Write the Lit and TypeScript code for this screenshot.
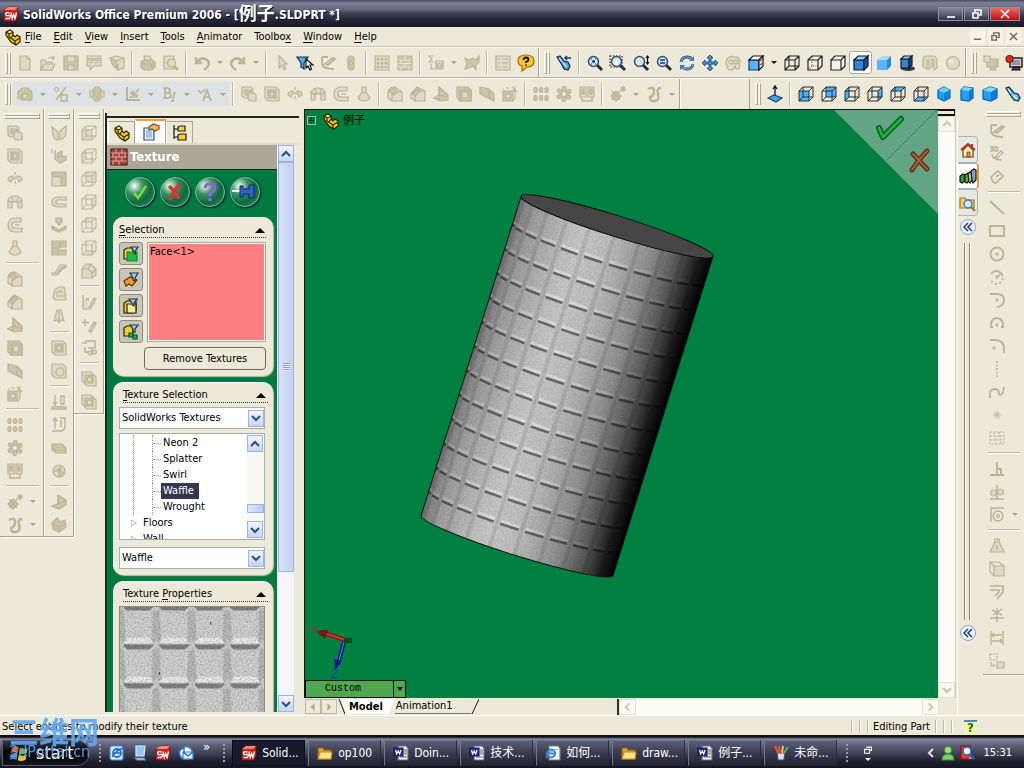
import { LitElement, html, svg, css, nothing, type SVGTemplateResult } from "lit";
import { customElement, state } from "lit/decorators.js";

type Frag = SVGTemplateResult;

/* ---------- icon building blocks ---------- */

const faces: Record<string, string> = {
  front: "M1 5h10v10H1z",
  back: "M5 1h10v10H5z",
  left: "M1 5l4-4v10l-4 4z",
  right: "M11 5l4-4v10l-4 4z",
  top: "M1 5l4-4h10l-4 4z",
  bottom: "M1 15l4-4h10l-4 4z",
};
const edges = "M1 5h10v10H1zM5 1h10v10H5zM1 5l4-4M11 5l4-4M11 15l4-4M1 15l4-4";
const outline = "M1 5h10v10H1zM1 5l4-4h10v10l-4 4M11 5l4-4";

const wireCube = (face: string, tint = "#4db2ff"): Frag => svg`
  <path d=${faces[face]} fill=${tint} stroke="none"/>
  <path d=${edges} fill="none" stroke="#2a2a2a" stroke-width="1"/>`;
const greyCube = (face: string): Frag => svg`
  <path d=${faces[face]} stroke="none"/><path d=${edges} fill="none" stroke-width="1"/>`;
const isoCube = (): Frag => svg`
  <path d="M8 1l6 3v8l-6 3-6-3V4z" fill="#1ea0f5" stroke="#0a5fa8"/>
  <path d="M2 4l6 3 6-3-6-3z" fill="#6fd0ff" stroke="none"/><path d="M8 7v8l6-3V4z" fill="#1180dd" stroke="none"/>`;
const blueCube = (): Frag => svg`
  <path d="M2 4l3-3 9 1v10l-4 3-8-1z" fill="#1ea0f5" stroke="#0a5fa8"/>
  <path d="M2 4l3-3 9 1-4 3z" fill="#7fd6ff" stroke="none"/><path d="M10 5l4-3v10l-4 3z" fill="#1276cc" stroke="none"/>`;
const wideCube = (): Frag => svg`
  <path d="M1 4l7-3 7 2v9l-6 3-8-2z" fill="#1ea0f5" stroke="#0a5fa8"/>
  <path d="M1 4l7-3 7 2-6 3z" fill="#7fd6ff" stroke="none"/><path d="M9 6l6-3v9l-6 3z" fill="#1276cc" stroke="none"/>`;
const lens = (inner: Frag): Frag => svg`
  <path d="M10 10l5 5" stroke="#2b3038" stroke-width="3" fill="none"/>
  <circle cx="6.500" cy="6.500" r="5" fill="#cfe9fb" stroke="#3a4f68" stroke-width="1.500"/>${inner}`;
const swLogo = (): Frag => svg`
  <path d="M1 4l4-3h10v10l-3 4H1z" fill="#c9231f" stroke="#7d100d" stroke-width=".8"/>
  <path d="M1 4l4-3h10l-3 3z" fill="#f08a80" stroke="none"/>
  <path d="M6.500 7q-4-1-4 1t3.500 1.500 0 3H2.500M8 6.500l1.300 6 1.400-4 1.300 4 1.500-6" fill="none" stroke="#fff" stroke-width="1.300"/>`;
const part = (): Frag => svg`
  <path d="M1 3l4-2 3 2v3l2 2 2-2 3 2v5l-4 3-5-3-5-7z" fill="#f3c91d" stroke="#2b2304"/>
  <path d="M1 3l3 2 4-2M4 5v3l6 4v4M10 12l5-3M6 9l2-3" fill="none" stroke="#2b2304"/><path d="M3 3l2-1 2 1-2 1z" fill="#fff4a0" stroke="none"/>`;
const doc = (): Frag => svg`
  <path d="M5 1h8l2 2v12H5z" fill="#fff" stroke="#667"/><path d="M11 5h3M11 7h3M11 9h3M7 12h7" stroke="#557" fill="none"/>
  <path d="M1 3h9v8H1z" fill="#26328f" stroke="#131b5a"/><path d="M2.500 5l1.200 4 1.500-3 1.500 3 1.300-4" fill="none" stroke="#fff"/>`;
const folder = (): Frag => svg`
  <path d="M1 3h5l1 2h7v9H1z" fill="#d9a52c" stroke="#8a6412"/><path d="M3 7h12l-1 7H1z" fill="#ffe58a" stroke="#b98b25"/>`;

const icons: Record<string, Frag> = {
  swLogo: swLogo(), part: part(), doc: doc(), folder: folder(),
  new: svg`<path d="M3 1h7l3 3v11H3z"/><path d="M10 1v3h3" fill="none"/>`,
  open: svg`<path d="M1 5h4l1 2h6v8H1z"/><path d="M4 9h11l-3 6H1z"/><path d="M8 4q3-4 6 0M14 1v3h-3" fill="none"/>`,
  save: svg`<path d="M1 1h14v14H1z" class="d"/><path d="M4 1h8v6H4zM5 10h6v5H5z"/>`,
  props: svg`<path d="M1 1h14v10H8l-4 4v-4H1z"/><path d="M3 3.500h4v2H3zM9 3.500h4v2H9zM3 7.500h4M9 7.500h4" fill="none"/>`,
  assembly: svg`<path d="M1 3l6-2 8 2v10l-6 2-3-3z"/><path d="M1 3l6 3v6M7 6l8-3M2 7l3 5 4 1V9" class="d"/>`,
  print: svg`<path d="M4 1h6l2 6H5z"/><path d="M1 7l3-2h9l2 3v4l-3 3H4l-3-3z" class="d"/><path d="M1 9h11v4" fill="none"/>`,
  preview: svg`<path d="M1 1h10v13H1z"/><circle cx="8.500" cy="8" r="4"/><path d="M11 11l4 4" stroke-width="2.500"/>`,
  undo: svg`<path d="M2 2v6h6M3 7q5-6 10-2t-3 10" fill="none" stroke-width="2.500"/>`,
  redo: svg`<path d="M14 2v6H8M13 7Q8 1 3 5t3 10" fill="none" stroke-width="2.500"/>`,
  cursor: svg`<path d="M5 1v12l3-3 2 5 2-1-2-5h3z"/>`,
  filter: svg`<path d="M0 2h11L7 8v6l-3-2V8z" fill="#5ea6e4" stroke="#12305c"/><path d="M9 4v9l2-2 2 4 1.500-1L13 10h3z" fill="#fff" stroke="#111"/>`,
  sketch: svg`<path d="M2 2v6q0 6 12 6M2 2h6M5 9l8-6 2 1-7 6z" fill="none" stroke-width="1.800"/>`,
  sketch3d: svg`<path d="M1 1h3v2H2h2v2H1M6 1v4h2l1-2-1-2zM3 8q0 6 10 6M6 11l6-6 2 2-6 5z" fill="none" stroke-width="1.300"/>`,
  traffic: svg`<rect x="5" y="1" width="6" height="14" rx="3" class="d"/><circle cx="8" cy="8" r="1.500"/>`,
  grid9: svg`<path d="M1 1h14v14H1z"/><path d="M4 3v10M8 3v10M12 3v10" stroke-dasharray="2.500 1.500" stroke-width="2.500"/>`,
  bricks: svg`<path d="M1 1h14v14H1z" class="d"/><path d="M1 5h14M1 8.500h14M1 12h14M8 1v4M4 5v3.500M12 5v3.500M8 8.500V12M4 12v3M12 12v3" stroke="#e6e2cd"/>`,
  sigma: svg`<path d="M6 1H1l3 3-3 3h5M3 9v5h4" fill="none"/><path d="M8 6h7v8H8z"/><circle cx="11.500" cy="10.500" r="2"/>`,
  animal: svg`<path d="M1 3l4 2 4-2 3 2 3-4v6l-3 3v5l-3-4-4 2-4 1 2-5z" class="d"/>`,
  list: svg`<path d="M1 1h14v14H1z"/><path d="M3 4h2M7 4h6M3 8h2M7 8h6M3 12h2M7 12h6"/>`,
  help: svg`<path d="M8 0q8 0 8 6t-7 6l-5 4V11q-4-1-4-5 0-6 8-6z" fill="#fbc62a" stroke="#a06b00"/><path d="M5.500 5q0-2.500 2.500-2.500t2.500 2q0 1.500-2.500 2.500v1M8 9.500v1.300" fill="none" stroke="#111" stroke-width="1.800"/>`,
  torch: svg`<path d="M1 2l3-1 4 5 4 1 2 4-2 4-4-1-2-4z" fill="#4b9bd8" stroke="#0d2950"/><path d="M7 8l4 4M3 3l3 4" stroke="#e4f4ff"/><path d="M15 3H9M11 1L9 3l2 2" fill="none" stroke="#123a86" stroke-width="1.500"/>`,
  torch2: svg`<path d="M1 2l3-1 5 6 4 1 2 4-2 3-4-1-3-4z" fill="#6ab9d8" stroke="#0d2950"/><path d="M8 9l4 4M3 3l3 4" stroke="#e4f4ff"/>`,
  zoomFit: lens(svg`<path d="M5 6.500h3M6.500 5v3" stroke="#123a86" stroke-width="1.500"/><path d="M4 4h1M8 4h1M4 9h1M8 9h1" stroke="#123a86"/>`),
  zoomArea: svg`<path d="M0 1h12v11H0z" fill="none" stroke="#222" stroke-dasharray="1.500 1.500"/>${lens(svg`<path d="M6.500 4v5l-2-2" fill="none" stroke="#fff" stroke-width="1.500"/>`)}`,
  zoomInOut: svg`${lens(svg``)}<path d="M14.500 1v8M13 3l1.500-2L16 3M13 7l1.500 2L16 7" fill="none" stroke="#111"/>`,
  zoomSel: lens(svg`<path d="M4 5h5M4 8h5" stroke="#123a86" stroke-width="1.600"/>`),
  rotate: svg`<path d="M2 7q1-5 6-5 3 0 5 2M14 9q-1 5-6 5-3 0-5-2" fill="none" stroke="#20477c" stroke-width="2.800"/><path d="M2 7q1-5 6-5 3 0 5 2M14 9q-1 5-6 5-3 0-5-2" fill="none" stroke="#7db9ec" stroke-width="1.200"/><path d="M15 1v5h-5zM1 15v-5h5z" fill="#3a76bd" stroke="none"/>`,
  pan: svg`<path d="M8 0l3 3H9v4h4V5l3 3-3 3V9H9v4h2l-3 3-3-3h2V9H3v2L0 8l3-3v2h4V3H5z" fill="#4a93dc" stroke="#15386e" stroke-width=".8"/>`,
  face: svg`<path d="M2 4q3-4 7-2 5-1 6 4l-1 8h-3l-1-3-2 4H4l-2-3-1-4z"/><circle cx="6" cy="7" r="2"/><circle cx="11" cy="7" r="2"/>`,
  viewCube: svg`<path d="M1 5h10v10H1z" fill="#58b4f6" stroke="#113a78"/><path d="M1 5l4-4h10l-4 4z" fill="#fff" stroke="#111"/><path d="M11 5l4-4v10l-4 4z" fill="#fff" stroke="#111"/><path d="M12 6l3-2M12 10l3-2" stroke="#c22"/>`,
  wire: svg`<path d=${edges} fill="none" stroke="#222" stroke-width="1.100"/>`,
  hiddenVis: svg`<path d=${outline} fill="#f3f1e6" stroke="#222"/><path d="M5 2v9h9M5 11l-4 4" fill="none" stroke="#555" stroke-dasharray="1 1.500"/>`,
  hiddenRem: svg`<path d=${outline} fill="#f6f4ea" stroke="#222"/>`,
  shadedEdge: svg`<path d=${faces.front} fill="#2f86d6" stroke="#07172e"/><path d=${faces.top} fill="#8ccdfb" stroke="#07172e"/><path d=${faces.right} fill="#1657a0" stroke="#07172e"/>`,
  shaded: svg`<path d=${faces.front} fill="#5bb5f7" stroke="none"/><path d=${faces.top} fill="#a6dbff" stroke="none"/><path d=${faces.right} fill="#2f86d6" stroke="none"/>`,
  shadow: svg`<ellipse cx="9" cy="13.500" rx="7" ry="2.500" fill="#3a3a3a" stroke="none"/><path d="M2 4h8v9H2z" fill="#3b86cb" stroke="#0b1d38"/><path d="M2 4l3-3h8l-3 3z" fill="#8ccdfb" stroke="#0b1d38"/><path d="M10 4l3-3v9l-3 3z" fill="#184e8e" stroke="#0b1d38"/>`,
  section: svg`<path d="M1 5q0-4 4-4h5q5 0 5 5v7l-3 2V7q0-3-2-3v8l-3 2V7q0-2-2-2v9l-4-2z"/>`,
  sphere: svg`<circle cx="8" cy="8" r="6.500"/><circle cx="6" cy="6" r="2" fill="#efecdd" stroke="none"/>`,
  monitor: svg`<path d="M4 4h11v8H4zM7 15h6l-1-3H8z" class="d"/><path d="M1 1h6v6H1z"/>`,
  monitor2: svg`<path d="M4 3h12v9H4z" fill="#ced3d8" stroke="#222" stroke-width="1.500"/><path d="M6 5h8v5H6z" fill="#8c98a5" stroke="none"/><path d="M6 15h8l-1-3H8z" fill="#444" stroke="#111"/><circle cx="3.500" cy="4" r="3.500" fill="#e02a22" stroke="#8d0f0a"/>`,
  feature: svg`<path d="M1 6l4-4h6l4 4v8H7L1 12z" class="d"/><path d="M5 8h7v6H5z"/><circle cx="8" cy="10" r="2.500"/>`,
  sketchTools: svg`<circle cx="3.500" cy="3.500" r="2" fill="none"/><path d="M3 14L13 1M8 9h6v6H8z" fill="none" stroke-width="1.400"/>`,
  blocks: svg`<path d="M4 3h8v10H4z"/><path d="M6 5h4v6H6z" class="d"/><path d="M1 5h3v6H1zM12 5h3v6h-3zM6 1h4v2H6zM6 13h4v2H6z"/>`,
  dim: svg`<path d="M2 1v13h13" fill="none" stroke-width="2"/><path d="M5 6l3 3 6-6M8 4v5h5M4 11h9" fill="none" stroke-width="1.600"/>`,
  boldItalic: svg`<path d="M2 2h4q3 0 3 2.500T6 7H4h3q3 0 3 2.500T6 12H2M4 2v10" fill="none" stroke-width="1.700"/><path d="M12 7h3M10 15h3M13.500 7l-2 8" fill="none" stroke-width="1.500"/>`,
  annot: svg`<path d="M1 4l3 3 4-4M6 15l4-11 4 11M7 11h6" fill="none" stroke-width="1.700"/>`,
  extrude: svg`<path d="M1 1h9l2 2v9H3l-2-2z"/><path d="M4 4h6v5H4z" class="d"/><path d="M7 7h6l2 2v6H9l-2-2z"/>`,
  cut: svg`<path d="M1 1h11l3 3v11H4l-3-3z"/><path d="M4 4h8v8H4z" class="d"/><path d="M6 6h4v4H6z"/>`,
  revolve: svg`<path d="M8 1v14" stroke-dasharray="3 1.500"/><path d="M1 9q0-4 5-4v3q-2 0-2 3zM15 9q0-4-5-4v3q2 0 2 3z"/>`,
  sweep: svg`<path d="M1 6q2-4 7-4t7 4v8h-4V9q-3-3-6 0v5H1z"/><path d="M1 6l4 3M15 6l-4 3M5 4l1 4M11 4l-1 4" fill="none"/>`,
  loft: svg`<path d="M14 1H7Q1 2 1 8t6 7h8v-4H8q-3 0-3-3t3-3h6z"/><path d="M13 8H8" fill="none"/>`,
  boundary: svg`<path d="M6 1h4v5l4 6q-2 3-6 3t-6-3l4-6z"/><path d="M6 6q2 1 4 0" fill="none"/>`,
  fillet: svg`<path d="M1 6q1-5 7-5l7 5v9H5l-4-3z"/><path d="M5 15V10q1-4 6-4h4" fill="none"/><path d="M2 5l5 4 3-3-3-4z" class="d"/>`,
  chamfer: svg`<path d="M1 8l6-7 8 4v10H5l-4-3z"/><path d="M5 15v-5l5-5h5" fill="none"/><path d="M2 8l6-6 2 3-5 5z" class="d"/>`,
  rib: svg`<path d="M6 1l9 8v5l-8 1-6-3 5-3z" class="d"/><path d="M6 1v8l8 2" fill="none"/><path d="M1 12l5-3v4z"/>`,
  shell: svg`<path d="M1 1h11l3 3v11H4l-3-3z" class="d"/><path d="M4 4h11v11H4z" fill="none"/><path d="M6 6h6v6H6z"/>`,
  draft: svg`<path d="M1 1l9 2 5 5v7L5 10l-4-2z" class="d"/><path d="M10 3v9l5 3" fill="none"/>`,
  hole: svg`<path d="M1 5h10v10H1z" class="d"/><path d="M11 5l2-2v9l-2 3"/><circle cx="6" cy="10" r="2.500"/><path d="M10 1l5 5M12 1h2M4 2h3M1 3h1" fill="none"/>`,
  pattern: svg`${[1, 6.5, 12].map((x) => svg`<rect x=${x} y="1.500" width="3" height="5" rx="1.500" class="d"/><rect x=${x} y="9.500" width="3" height="5" rx="1.500" class="d"/>`)}`,
  circPat: svg`${[0, 60, 120, 180, 240, 300].map((a) => svg`<rect x="6.500" y="0.500" width="3.500" height="5" rx="1.500" class="d" transform="rotate(${a} 8 8)"/>`)}`,
  mirror: svg`<path d="M1 1h6v10H1zM9 1h6v10H9z"/><path d="M3 3h2v5H3zM11 3h2v5h-2z" class="d"/><path d="M3 12v3h10v-4" fill="none" stroke-width="1.500"/>`,
  refGeo: svg`<path d="M1 10l5-5 5 5-5 5z" class="d"/><path d="M2 5l8 9M10 5l-8 9M13 0v6M10 3h6M11 1l4 4M15 1l-4 4" fill="none"/>`,
  curve: svg`<path d="M2 3q6-3 6 2t-4 6q0 5 5 4t3-7 3-6" fill="none" stroke-width="2.400"/>`,
  axis: svg`<path d="M8 1v12M6 3l2-3 2 3" fill="none" stroke="#111" stroke-width="1.300"/><path d="M1 12l6-3 8 3-6 4z" fill="#48a6f0" stroke="#15467e"/>`,
  vFront: wireCube("front"), vBack: wireCube("back"), vLeft: wireCube("left"),
  vRight: wireCube("right"), vTop: wireCube("top"), vBottom: wireCube("bottom"),
  iso: isoCube(), tri: blueCube(), dim3: wideCube(),
  cFront: greyCube("front"), cBack: greyCube("back"), cLeft: greyCube("left"),
  cRight: greyCube("right"), cTop: greyCube("top"), cBottom: greyCube("bottom"),
  bend: svg`<path d="M1 2l6 5v8q-5-1-5-6zM15 1L9 6v9q6-2 6-8z"/>`,
  tab: svg`<path d="M1 1v4M4 2v9l5 4 6-3V8l-4 1V3L7 5v5" class="d"/>`,
  flange: svg`<path d="M1 1h14v14h-4V6L1 5z" class="d"/><path d="M1 6h9v9H1z"/>`,
  hem: svg`<path d="M15 3H6q-5 1-5 5t5 5h9v-3H7q-2 0-2-2t2-2h8z"/>`,
  jog: svg`<path d="M5 1h6v4l-3 3-3-3zM1 9l7 4 7-4v3l-7 3-7-3z" class="d"/>`,
  tiles: svg`<path d="M1 1h8v7H1zM9 1h6v6H9zM1 8h6v7H1zM7 10h8v5H7z" class="d"/>`,
  step: svg`<path d="M1 12h4l6-8h4v-2H9L4 10H1zM6 12l6-7h3" />`,
  roll: svg`<path d="M3 8q0-6 6-7t5 5l1 8H5l-3-2z"/><path d="M5 10h10M5 8q3-4 7-2" fill="none"/>`,
  flare: svg`<path d="M6 1h4l3 11-3-1-2 3-2-3-3 1zM8 2v11"/>`,
  hole2: svg`<path d="M1 1h11l3 3v11H4l-3-3z"/><circle cx="9" cy="9" r="4"/>`,
  down: svg`<path d="M4 1v9M2 8l2 3 2-3M10 2h3v8h-3zM1 13h14v2H1z" fill="none" stroke-width="1.300"/>`,
  up: svg`<path d="M4 12V2M2 4l2-3 2 3M9 1h5v8q0 4-4 5H1M10 3v7" fill="none" stroke-width="1.400"/>`,
  slab: svg`<path d="M1 4h10l4 4v5H5L1 10z" class="d"/><path d="M1 7l4 3h10" fill="none"/>`,
  ball: svg`<circle cx="8" cy="8" r="6"/><path d="M3 8h7V2M8 5v8l5-4" class="d"/>`,
  fold: svg`<path d="M7 1l8 5v5l-7 4-7-3 6-2z" class="d"/><path d="M7 10V1M7 10l8-3" fill="none"/>`,
  unfold: svg`<path d="M1 6l5-5 3 4 5-2 1 7-7 5-6-3z" class="d"/><path d="M2 7l6 3v5M8 10l7-4" fill="none"/>`,
  cornerCube: svg`<path d="M1 6l4-5h5l5 5v6l-4 3H1z"/><path d="M1 6h6l4 4v5M7 6l3-5M11 10l4-4" fill="none"/>`,
  sheetPen: svg`<path d="M2 1v14h8M5 4l3 3M5 7l3-3M8 13l5-9 2 1-5 9z"/>`,
  plusPen: svg`<path d="M4 2v7M1 5.500h7M8 14l5-9 2 1-5 9z" stroke-width="1.400"/>`,
  tree: svg`<path d="M4 1h10v7H7M1 3h5M4 7v5h4M11 8v4" fill="none" stroke-width="1.400"/><circle cx="9" cy="13" r="2"/><circle cx="13.500" cy="12" r="2"/>`,
  stack: svg`<path d="M1 1h9l5 5v9H6l-5-5z"/><path d="M4 4h8v8H4z" class="d"/><circle cx="8.500" cy="8.500" r="2.500"/>`,
  tag: svg`<path d="M2 8l7-6 5 5-7 7-3-1zM7 8l3-2" fill="none" stroke-width="1.600"/>`,
  line: svg`<path d="M1 1l14 13" stroke-width="1.800"/>`,
  rect: svg`<path d="M1 3h14v10H1z" fill="none" stroke-width="1.800"/>`,
  circle: svg`<circle cx="8" cy="8" r="6.500" fill="none" stroke-width="1.800"/><path d="M8 6v4M6 8h4"/>`,
  arc1: svg`<path d="M2 5q6-7 12 2" fill="none" stroke-width="1.800"/><path d="M14 9q-2 6-7 6-4-1-6-5" fill="none" stroke-width="1.800" stroke-dasharray="2 2.500"/><path d="M8 6v4M6 8h4M8 8l5-4"/>`,
  arc2: svg`<path d="M1 2h7q7 0 7 6t-7 7" fill="none" stroke-width="1.800"/><path d="M8 6v4M6 8h4"/>`,
  arc3: svg`<path d="M2 12Q1 4 8 3q7 1 6 9M1 12h3M12 12h3" fill="none" stroke-width="1.800"/><path d="M8 8v4M6 10h4"/>`,
  arc4: svg`<path d="M1 2h5q9 0 9 9v4" fill="none" stroke-width="1.800"/><path d="M5 8v4M3 10h4"/>`,
  center: svg`<path d="M8 0v16" stroke-width="1.500" stroke-dasharray="2 1.500"/>`,
  spline: svg`<path d="M1 14q-1-9 4-9t5 5q4 3 5-7" fill="none" stroke-width="1.800"/>`,
  point: svg`<path d="M8 4v8M4 8h8M5 5l6 6M11 5l-6 6" stroke-width=".9"/>`,
  plane: svg`<path d="M1 2h14v12H1zM1 6h14M1 10h14M5 2l2 12M10 2l2 12" fill="none" stroke-dasharray="2 1.300" stroke-width="1"/>`,
  perp: svg`<path d="M1 14h14M8 1v13M8 8h4v6" fill="none" stroke-width="1.800"/>`,
  relation: svg`<path d="M1 15h14M8 1v14" fill="none" stroke-width="1.500"/><circle cx="4.500" cy="9" r="3"/><circle cx="11.500" cy="8" r="3"/>`,
  concentric: svg`<path d="M2 15V1h13" fill="none" stroke-width="1.500"/><circle cx="9" cy="9" r="5" fill="none" stroke-width="1.500"/><circle cx="9" cy="9" r="1.500"/>`,
  bell: svg`<path d="M6 1h4l1 5 4 8H1l4-8zM8 3v2M8 7v5"/>`,
  box: svg`<path d="M5 5h10v10H5z"/><path d="M5 5L1 1h9l5 4M1 1v9l4 5" fill="none"/>`,
  offset: svg`<path d="M1 2h13v6l-6 7M1 6h9v2l-4 4" fill="none" stroke-width="1.700"/>`,
  trim: svg`<path d="M1 11h14M8 1v14M3 3l10 5M13 2L4 8" fill="none" stroke-width="1.500"/>`,
  extend: svg`<path d="M2 1v14M14 1v14M3 5h10M3 11h10M5 3L3 5l2 2M11 9l2 2-2 2" fill="none" stroke-width="1.300"/>`,
  convert: svg`<path d="M1 1h7v6H1z" fill="none" stroke-dasharray="2 1"/><path d="M8 9h7v6H8z"/><path d="M2 9v4h4M4 11l2 2" fill="none"/>`,
  ie: svg`<path d="M4 1h9l2 2v12H4z" fill="#fff" stroke="#778"/><circle cx="6" cy="8.500" r="4" fill="none" stroke="#2d7fd6" stroke-width="2"/><path d="M3 8.500h7" stroke="#2d7fd6" stroke-width="1.800"/><path d="M1 13Q5 5 13 4" fill="none" stroke="#49a3ee"/>`,
  paint: svg`<path d="M4 8h8l-1 7H5z" fill="#d8e2ea" stroke="#445"/><path d="M5 8L2 1M7 8L6 1" stroke="#e0553b" stroke-width="2"/><path d="M9 8l1-7" stroke="#f1c24a" stroke-width="2"/><path d="M11 8l4-6" stroke="#58b368" stroke-width="2"/>`,
  desktop: svg`<path d="M4 1h9l-1 10H4z" fill="#8ec7f5" stroke="#d9ecfb"/><path d="M3 13h9l1 2H5z" fill="#cfd9e4" stroke="#7d8ba0"/>`,
  outlook: svg`<circle cx="8" cy="8" r="6.500" fill="#fff" stroke="#2d7fd6" stroke-width="1.500"/><path d="M5 7h10v7H5z" fill="#dff0ff" stroke="#2d7fd6"/><path d="M5 7l5 4 5-4M2 5l4-2v5" fill="none" stroke="#2462b0" stroke-width="1.300"/>`,
  ie2: svg`<rect x="1" y="1" width="13" height="14" rx="2" fill="#d8efff" stroke="#3c8bd0"/><circle cx="8" cy="8" r="4" fill="none" stroke="#1d6ec8" stroke-width="1.800"/><path d="M4.500 8h7M3 12Q8 4 15 3" fill="none" stroke="#1d6ec8" stroke-width="1.400"/>`,
  flag: svg`<path d="M1 3q3-2 6 0L6 8Q3 6.500 0 8z" fill="#e8512a" stroke="none"/><path d="M8 3.500q3 2 7 0L14 8q-4 2-7 .5z" fill="#7db92c" stroke="none"/><path d="M0 9q3-2 6 0l-1 5q-3-1.500-6 0z" fill="#3f8ae0" stroke="none"/><path d="M7 9.500q3 2 7 0L13 14q-4 2-7 .5z" fill="#f5c321" stroke="none"/>`,
  person: svg`<circle cx="8" cy="5" r="3.500" fill="#9be08a" stroke="#3f8f36"/><path d="M2 15q0-6 6-6t6 6z" fill="#7fce6e" stroke="#3f8f36"/>`,
  search: svg`<path d="M1 1h9v13H1z" fill="#e83c2c" stroke="#8d150c"/><path d="M10 8l5 6H9z" fill="#f3c321" stroke="none"/><path d="M8 8l6 6" stroke="#2b58c8" stroke-width="3"/><circle cx="7" cy="6" r="4" fill="#e6f4ff" stroke="#2b58c8" stroke-width="1.500"/>`,
  restore: svg`<path d="M5 2h9v6h-3M2 6h9v7H2z" fill="none" stroke="#fff" stroke-width="1.800"/>`,
  green: svg`<path d="M1 4l3-2h6v11H1z" fill="#f4cf28" stroke="#222"/><path d="M4 6h10v9H4z" fill="#27b443" stroke="#093"/><path d="M8 1h7l-2.500 4v3L11 7V5z" fill="#9ec9f5" stroke="#234"/>`,
  orange: svg`<path d="M1 9l6-4 7 3-5 6-3-2-3 2z" fill="#f49a26" stroke="#5e3406"/><path d="M7 1h8l-3 5v3l-2-1V6z" fill="#9ec9f5" stroke="#234"/>`,
  yellow: svg`<path d="M1 5l3-2h9v9l-3 3H1z" fill="#f4cf28" stroke="#222"/><path d="M4 6h9v9H4z" fill="#ffe98c" stroke="#222"/><path d="M6 1h8l-3 4v3L9 7V5z" fill="#9ec9f5" stroke="#234"/>`,
  yellowGreen: svg`<path d="M1 4l3-2h6v10H1z" fill="#f4cf28" stroke="#222"/><path d="M6 9h4v4H6zM10 11h4v4h-4z" fill="#27b443" stroke="#052"/><path d="M7 1h8l-3 4v3l-2-1V5z" fill="#9ec9f5" stroke="#234"/>`,
  brick: svg`<path d="M0 0h16v16H0z" fill="#a8433a" stroke="#4f1611"/><path d="M0 4h16M0 8h16M0 12h16M5 0v4M11 0v4M8 4v4M2 4v4M14 4v4M5 8v4M11 8v4M8 12v4M2 12v4" stroke="#e0b3a6" stroke-width=".9"/>`,
  propPage: svg`<path d="M1 4h10v12H1z" fill="#eaf4ff" stroke="#234c8c"/><path d="M3 7h6M3 9h6M3 11h6M3 13h6" stroke="#4f8fd6" stroke-width=".9"/><path d="M6 3l4-3 6 2v3l-4 2-3-2-3 1z" fill="#f0b774" stroke="#7a4a17"/>`,
  configs: svg`<path d="M2 0v14M2 4h4M2 12h4" stroke="#111" fill="none"/><path d="M6 2l2-1h5v5H6z" fill="#f4cf28" stroke="#222"/><path d="M6 10l2-1h6v6H6z" fill="#f4cf28" stroke="#222"/>`,
  house: svg`<path d="M3 8v7h10V8L8 3z" fill="#fff3b8" stroke="#5b3b12"/><path d="M1 8l7-6 7 6" fill="none" stroke="#c22b1e" stroke-width="1.800"/><path d="M7 10h3v5H7z" fill="#e39a2a" stroke="#5b3b12" stroke-width=".8"/><path d="M12 2v3" stroke="#c22b1e" stroke-width="2"/>`,
  books: svg`<path d="M0 8l3-2 2 1v6l-3 2-2-1z" fill="#2d9b46" stroke="#111"/><path d="M5 7l3-2 1 1v7l-2 2-2-1z" fill="#3dbb58" stroke="#111"/><path d="M8 6l2-2 2 1v7l-2 3-1-1z" fill="#f0cd2c" stroke="#111"/><path d="M11 3l3-2 2 1v10l-3 3-1-2z" fill="#7aa2dc" stroke="#111"/>`,
  folderSearch: svg`<path d="M0 3h5l1 2h8v8H0z" fill="#f4cf6a" stroke="#a87512"/><circle cx="8" cy="9" r="4" fill="#cfe9fb" stroke="#3a78c0" stroke-width="1.400"/><path d="M11 12l4 4" stroke="#b0672c" stroke-width="2.200"/>`,
};

const icon = (name: string, size = "m") => html`<svg class="ic ${size}" viewBox="0 0 16 16" aria-hidden="true">${icons[name]}</svg>`;
const chevron = (d: string, cls = "chev") => html`<svg class=${cls} viewBox="0 0 10 10" aria-hidden="true"><path d=${d} /></svg>`;
const DOWN = "M1 3l4 4 4-4";
const UP = "M1 7l4-4 4 4";
const LEFT = "M7 1L3 5l4 4";
const RIGHT = "M3 1l4 4-4 4";

/* ---------- toolbar contents: "|" is a divider, a trailing ">" adds a drop-down arrow ---------- */

const standardBar = "new open save props assembly | print preview | undo> redo> | cursor filter sketch traffic | grid9 bricks | sigma> animal | list help".split(" ");
const viewBar = "torch | zoomFit zoomArea zoomInOut zoomSel rotate pan face viewCube> wire hiddenVis hiddenRem shadedEdge* shaded shadow section sphere".split(" ");
const captureBar = "monitor monitor2".split(" ");
const commandBar = "feature> sketchTools> blocks> dim> boldItalic> annot>".split(" ");
const featureBar = "| extrude cut revolve sweep loft boundary | fillet chamfer rib shell draft hole | pattern circPat mirror | refGeo> curve>".split(" ");
const orientBar = "axis | vFront vBack vLeft vRight vTop vBottom iso tri dim3 torch2".split(" ");
const leftBars = [
  "extrude cut revolve sweep loft boundary | fillet chamfer rib shell draft hole | pattern circPat mirror | refGeo> curve>".split(" "),
  "bend tab flange hem jog tiles step roll flare | cut hole2 | down up slab ball | fold unfold".split(" "),
  "cFront cLeft cBack cRight cTop cBottom cornerCube | sheetPen plusPen tree | stack stack".split(" "),
];
const sketchBar = "sketch sketch3d tag | line rect circle arc1 arc2 arc3 arc4 center spline point plane | perp relation concentric> | bell box offset trim extend convert".split(" ");

const menus: [string, string, string][] = [
  ["", "F", "ile"], ["", "E", "dit"], ["", "V", "iew"], ["", "I", "nsert"], ["", "T", "ools"],
  ["", "A", "nimator"], ["Toolbo", "x", ""], ["", "W", "indow"], ["", "H", "elp"],
];

const tasks: [string, string][] = [
  ["swLogo", "Solid..."], ["folder", "op100"], ["doc", "Doin..."], ["doc", "技术..."],
  ["ie", "如何..."], ["folder", "draw..."], ["doc", "例子..."], ["paint", "未命..."],
];

/* ---------- geometry of the modelled cylinder ---------- */

const R = 100.7;
const DEG = Math.PI / 180;
const onRim = (deg: number, y: number) => `${(R * (1 - Math.cos(deg * DEG))).toFixed(1)} ${(y + 10 * Math.sin(deg * DEG)).toFixed(1)}`;
const ribs = Array.from({ length: 12 }, (_, r) => 29 + r * 25.5);
const columns = Array.from({ length: 12 }, (_, c) => c * 15);
const dashes = (lift: number) =>
  ribs.flatMap((y) => columns.map((a) => `M${onRim(a + 2, y + lift)}L${onRim(a + 13, y + lift)}`)).join("");
const grooves = columns.map((a) => `M${onRim(a, 0)}L${onRim(a, 335)}`).join("");
const BODY = "M0 0A100.7 10 0 0 0 201.4 0V335A100.7 10 0 0 1 0 335z";

@customElement("app-root")
export class AppRoot extends LitElement {
  @state() private texture = "Waffle";

  static styles = css`
    :host { display: flex; flex-direction: column; height: 100vh; overflow: hidden; position: relative;
      background: #ece9d8; color: #000; font: 11px/14px "DejaVu Sans Condensed", "Noto Sans", "Noto Sans CJK SC", sans-serif;
      cursor: default; }
    *, *::before, *::after { box-sizing: border-box; }
    button { font: inherit; color: inherit; padding: 0; margin: 0; border: 0; background: none; }
    u { text-underline-offset: 2px; }
    .ic { display: block; fill: #dedac4; stroke: #b9b492; stroke-width: 1.2; flex: none; width: 16px; height: 16px; overflow: visible; }
    .ic .d { fill: #cbc6a8; }
    .ic.l { width: 18px; height: 18px; }
    .chev { width: 10px; height: 10px; fill: none; stroke: #2c4a86; stroke-width: 2; display: block; }

    .title { height: 27px; flex: none; display: flex; align-items: center; gap: 4px; padding: 0 4px 0 3px; color: #fff;
      font-weight: bold; font-size: 12px; background: linear-gradient(#4a4a62 0, #7d7f98 3px, #66687f 9px, #3c3d50 14px, #26273a 19px, #191925); }
    .title h1 { font: inherit; margin: 0; flex: 1; text-shadow: 1px 1px #111; white-space: nowrap; }
    .title h1 span { font-size: 18px; line-height: 18px; vertical-align: -1px; }
    .win { display: flex; gap: 1px; }
    .win button { width: 25px; height: 14px; border: 1px solid #8d8fa3; background: linear-gradient(#85879a, #34354a); display: grid; place-items: center; }
    .win button.x { width: 30px; background: linear-gradient(#f06a62, #c00d10); }
    .win svg { width: 12px; height: 10px; fill: none; stroke: #fff; stroke-width: 1.6; }

    .menu { height: 20px; flex: none; display: flex; align-items: center; padding: 0 3px 0 5px; border-bottom: 1px solid #c5c1ab; }
    .menu nav { display: flex; gap: 12px; flex: 1; margin-left: 4px; }
    .menu nav button { height: 18px; }
    .doc { display: flex; gap: 3px; }
    .doc button { width: 15px; height: 15px; background: #f6f4ea; display: grid; place-items: center; }
    .doc svg { width: 9px; height: 9px; fill: none; stroke: #6b6857; stroke-width: 1.6; }

    .row { height: 31px; flex: none; display: flex; overflow: hidden; border-top: 1px solid #fff; border-bottom: 1px solid #b5b19c; }
    .row.last { border-bottom: 0; }
    .strip { display: flex; align-items: center; flex: none; }
    .strip.end { border-right: 1px solid #a9a58e; box-shadow: 1px 0 #fff; padding-right: 1px; }
    .strip.push { margin-left: auto; border-left: 1px solid #a9a58e; }
    .strip.tint { background: #dee2e4; height: 24px; align-self: center; }
    .grip { width: 13px; height: 28px; flex: none; display: flex; gap: 1px; padding: 3px 2px 3px 5px; }
    .grip i { width: 3px; border: 1px solid #fff; border-right-color: #aaa68f; border-bottom-color: #aaa68f; }
    .tool { width: 23px; height: 23px; display: grid; place-items: center; flex: none; }
    .tool.on { background: #fff; border: 1px solid #aaa68f; border-radius: 3px; }
    .more { width: 13px; height: 23px; display: grid; place-items: center; flex: none; }
    .more::before { content: ""; border: 3px solid transparent; border-top: 3px solid #a9a588; border-bottom: 0; }
    .more.dark::before { border-top-color: #111; }
    .sep { width: 8px; height: 24px; flex: none; display: flex; justify-content: center; }
    .sep::before { content: ""; width: 2px; border-left: 1px solid #bdb9a3; border-right: 1px solid #fff; }

    .main { flex: 1; min-height: 0; display: flex; }
    .rail { align-self: flex-start; flex: none; display: flex; flex-direction: column; padding: 3px 0 0 3px;
      border-right: 1px solid #a9a58e; border-bottom: 1px solid #a9a58e; box-shadow: 1px 1px #fff; }
    .rail.wide { width: 44px; }
    .rail.mid { width: 30px; }
    .rail .grip { width: auto; height: 9px; flex-direction: column; padding: 1px 3px 2px 1px; gap: 0; }
    .rail .grip i { width: auto; height: 3px; }
    .rail .sep { width: auto; height: 8px; margin: 0 4px 0 3px; flex-direction: column; justify-content: center; }
    .rail .sep::before { width: auto; height: 2px; border: 0; border-top: 1px solid #bdb9a3; border-bottom: 1px solid #fff; }
    .rail.right { padding: 1px 0 2px 2px; margin-left: 4px; width: 41px; border-right: 0; }

    .panel { width: 194px; flex: none; margin: 4px 0 3px 1px; display: flex; flex-direction: column; border-left: 2px solid #222; }
    .panelTop { border-top: 2px solid #222; margin-top: 3px; padding: 1px 1px 0; display: flex; }
    .panelTop button { width: 27px; height: 22px; margin-top: 2px; border: 1px solid #aaa68f; border-bottom: 0; border-left-color: #fff; display: grid; place-items: center; }
    .panelTop button.on { width: 31px; height: 24px; margin-top: 0; background: #fff; border-top: 2px solid #f0a030; }
    .panelBody { flex: 1; min-height: 0; display: flex; border-top: 2px solid #dfdccb; padding-right: 5px; }
    .props { flex: 1; min-width: 0; overflow: hidden; background: #017a41; display: flex; flex-direction: column; }
    .props h2 { margin: 0; height: 25px; flex: none; background: #aca899; color: #fff; display: flex; align-items: center; gap: 3px; padding-left: 4px; font-size: 13px;
      border-bottom: 1px solid #222; }
    .rounds { display: flex; gap: 5px; height: 47px; flex: none; align-items: center; padding: 0 0 3px 18px; }
    .rounds button { width: 30px; height: 30px; border-radius: 50%; border: 1px solid #7fbb9b; display: grid; place-items: center;
      background: radial-gradient(circle at 30% 28%, #fff 0, #b5dcc6 10%, #3d9068 30%, #0b6a3c 60%, #2a8156 85%, #7fc3a0 100%); box-shadow: 1px 1px 2px #013; }
    .rounds svg { width: 20px; height: 20px; fill: none; overflow: visible; }
    .card { flex: none; margin: 0 4px 6px 6px; padding: 5px 7px 6px 5px; border-radius: 10px; background: #ece9d8; border: 1px solid #fff; border-width: 1px 0 0 1px;
      box-shadow: 1px 1px 1px #c2bfa9; }
    .card h3 { font: inherit; margin: 0 0 4px; height: 15px; display: flex; justify-content: space-between; align-items: center; border-bottom: 1px dotted #333; padding-right: 1px; }
    .card.in { padding-right: 8px; }
    .card.in h3 { margin: 0 -3px 4px 4px; padding-right: 2px; }
    .card h3::after { content: ""; border: 5px solid transparent; border-bottom: 5px solid #000; border-top: 0; }
    .select { display: flex; gap: 4px; }
    .kinds { display: flex; flex-direction: column; gap: 3px; }
    .kinds button { width: 24px; height: 23px; border: 1px solid #8d8a7b; border-radius: 3px; background: #c9c6b9; display: grid; place-items: center; }
    .faces { flex: 1; height: 100px; background: #ff8080; border: 2px solid #fff; outline: 1px solid #aaa68f; outline-offset: -1px; padding: 1px; margin: 0; list-style: none; }
    .faces li { height: 14px; }
    .wideBtn { display: block; width: 122px; height: 23px; margin: 4px 0 0 auto; border: 1px solid #6d6b5c; border-radius: 4px; }
    .combo { display: grid; height: 22px; align-items: center; border: 1px solid #a5acb2; background: #fff; }
    .combo select { grid-area: 1 / 1; width: 100%; height: 20px; border: 0; background: none; appearance: none; font: inherit; color: #000; padding: 0 0 0 2px; outline: 0; }
    .combo span { grid-area: 1 / 1; justify-self: end; pointer-events: none; }
    .knob { width: 16px; height: 17px; border: 1px solid #9db4e0; background: linear-gradient(#f2f6ff, #c5d5f6); display: grid; place-items: center; flex: none; }
    .treeBox { display: flex; height: 107px; margin: 4px 0 7px; border: 1px solid #a5acb2; background: #fff; overflow: hidden; }
    .tree { flex: 1; margin: 0; padding: 1px 0 0 13px; list-style: none; overflow: hidden; }
    .tree ul { margin: 0; padding: 0 0 0 18px; list-style: none; border-left: 1px dotted #999; }
    .tree ul li { display: flex; align-items: center; height: 16px; border-left: 1px dotted #999; }
    .tree ul li::before { content: ""; width: 8px; border-top: 1px dotted #999; }
    .tree ul li span { padding: 1px 2px; margin-left: 0; }
    .tree ul li.on span { background: #333850; color: #fff; padding-right: 5px; }
    .node { display: flex; align-items: center; height: 16px; gap: 8px; }
    .node::before { content: "▷"; font-size: 8px; width: 4px; color: #777; margin-left: -2px; }
    .bar { width: 17px; display: flex; flex-direction: column; background: #f8f8f4; flex: none; }
    .bar .thumb { border: 1px solid #9db4e0; background: linear-gradient(90deg, #dce5fb, #bccbf0); }
    .treeBox .thumb { height: 9px; margin-top: auto; margin-bottom: 8px; }
    .treeBox .bar { width: 17px; padding: 1px 0 1px 0; }
    .panelBody > .bar { background: #f5f6fb; padding-left: 1px; }
    .panelBody .thumb.tall { flex: 409; display: grid; place-items: center; background: linear-gradient(90deg, #d8e1fa, #c3d0ef); }
    .thumb.tall i { width: 7px; height: 8px; background: repeating-linear-gradient(#8ca0cc 0 1px, #eef 1px 2px); }
    .space { flex: 123; }
    .swatch { display: block; width: 100%; height: 124px; border: 1px solid #8d8a7b; }

    .work { flex: 1; min-width: 0; display: flex; flex-direction: column; margin-left: 5px; }
    .view { flex: 1; min-height: 0; display: flex; }
    .canvas { position: relative; flex: 1; min-width: 0; background: #008040; border-top: 1px solid #111; border-left: 1px solid #111; overflow: hidden; }
    .scene { display: block; width: 100%; height: 100%; }
    .corner { position: absolute; top: 0; right: 0; width: 104px; height: 104px; }
    .root { position: absolute; top: 1px; left: 2px; display: flex; align-items: center; gap: 4px; height: 19px; }
    .root .ic { margin-left: 3px; }
    .plus { width: 9px; height: 9px; border: 1px solid #8fc7a9; display: grid; place-items: center; font-size: 9px; line-height: 7px; }
    .triad { position: absolute; left: 1px; bottom: 16px; width: 60px; height: 60px; }
    .custom { position: absolute; left: 0; bottom: 0; display: flex; border: 1px solid #111; background: #50a850; height: 18px; font: 10px/16px "Liberation Mono", monospace; }
    .custom button:first-child { width: 87px; padding-right: 13px; }
    .custom button:last-child { width: 12px; border-left: 1px solid #111; display: grid; place-items: center; }
    .custom button:last-child::before { content: ""; border: 3px solid transparent; border-top: 4px solid #111; border-bottom: 0; }
    .side { width: 18px; flex: none; background: #fdfdf8; display: flex; flex-direction: column; justify-content: space-between; border-right: 1px solid #d5d2c0; }
    .side .split { height: 7px; background: #ece9d8; border: 2px solid #111; border-width: 2px 1px 2px 0; }
    .pale { width: 17px; height: 16px; border: 1px solid #e2e0d2; background: #f8f7f0; display: grid; place-items: center; }
    .pale .chev { stroke: #c9c6b6; }
    .sheets { height: 17px; flex: none; display: flex; align-items: stretch; padding: 1px 17px 0 1px; }
    .nav { width: 16px; height: 15px; border: 1px solid #bdb9a3; display: grid; place-items: center; }
    .nav .chev { width: 8px; fill: #b0ac97; stroke: none; }
    .sheet { height: 15px; line-height: 14px; }
    .sheet.on { background: #fff; font-weight: bold; padding: 0 12px 0 8px; margin-left: -4px; clip-path: polygon(0 0, 100% 0, calc(100% - 6px) 100%, 5px 100%); }
    .sheet.off { padding: 0 0 0 1px; border-bottom: 1px solid #777; width: 76px; text-align: left; }
    .slash { width: 8px; height: 15px; stroke: #111; fill: none; flex: none; }
    .hbar { margin-left: auto; width: 322px; border-left: 2px solid #333; display: flex; justify-content: space-between; background: #fdfdf8; }
    .hbar .chev { width: 9px; }

    .pane { width: 22px; flex: none; display: flex; flex-direction: column; align-items: flex-start; border-left: 1px solid #fff; padding: 27px 0 70px; margin-left: 1px; }
    .pane .tabs button { display: grid; place-items: center; width: 20px; height: 27px; border: 1px solid #a3b3c2; border-left: 0; border-radius: 0 4px 4px 0; background: #e6e8e2; }
    .pane .tabs button.on { background: #fff; width: 21px; height: 26px; border-right: 2px solid #e39a3d; }
    .collapse { width: 16px; height: 16px; border-radius: 50%; border: 1px solid #8fa3d6; background: #eef2ff; display: grid; place-items: center; margin: 3px 0 4px 2px; }
    .collapse svg { width: 10px; height: 10px; fill: none; stroke: #1d3a8f; stroke-width: 1.5; }
    .rails { flex: 1; width: 6px; margin: 4px 0 2px 6px; border-left: 1px solid #8c8975; border-right: 1px solid #8c8975; box-shadow: 1px 0 #fff, inset 1px 0 #fff; }

    .status { height: 20px; flex: none; border-top: 1px solid #fff; display: flex; align-items: center; padding: 2px 0 0 2px; }
    .status p { margin: 0; flex: 1; }
    .ticks { display: flex; gap: 6px; }
    .ticks i { width: 2px; height: 13px; border-left: 1px solid #bdb9a3; border-right: 1px solid #fff; }
    .status output { margin: 0 5px 0 4px; }
    .q { width: 13px; height: 14px; margin: 0 47px 0 11px; background: #f2f6a8; border-top: 2px solid #4585d0; color: #07760f; font-weight: bold; font-size: 13px; line-height: 12px; text-align: center; }

    .task { height: 33px; flex: none; display: flex; align-items: stretch; color: #fff; padding: 5px 0 2px; font-size: 12px;
      background: linear-gradient(#111 0, #111 2px, #4c4e63 3px, #85879e 4px, #63657b 9px, #45465a 17px, #222334 25px, #14141f); }
    .start { width: 88px; margin-left: 2px; border-radius: 0 14px 14px 0; border: 1px solid #55576b; background: linear-gradient(#34353f, #050507 45%, #16161c);
      display: flex; align-items: center; gap: 7px; padding-left: 8px; font-size: 18px; line-height: 18px; text-shadow: 1px 1px #000; }
    .quick { display: flex; align-items: center; gap: 7px; margin-left: 9px; flex: none; }
    .dots { width: 3px; height: 18px; border-left: 2px dotted #9a9cb0; align-self: center; }
    .more2 { font-size: 13px; margin: -12px 6px 0 2px; }
    .apps { display: flex; gap: 3px; margin-left: 6px; flex: none; }
    .apps button { width: 73px; display: flex; align-items: center; gap: 5px; padding-left: 8px; border: 1px solid #74768c; border-right-color: #2a2b3a; border-bottom-color: #222230;
      background: linear-gradient(#5c5e76, #3a3b50 50%, #232435); white-space: nowrap; }
    .apps button.on { background: #191a2b; border-color: #0d0e18; }
    .tray { margin-left: auto; display: flex; align-items: center; gap: 4px; padding-right: 12px; font-size: 11px; }
    .tray time { margin-left: 3px; }
    .mid2 { display: grid; place-items: center; margin-left: 14px; align-content: center; gap: 3px; flex: none; }
    .mid2 .ic { width: 10px; height: 9px; }
    .mid2::after { content: ""; border: 3px solid transparent; border-top: 3px solid #fff; border-bottom: 0; }
    .mark { position: absolute; left: 9px; bottom: 7px; color: #5fa8f8; opacity: .9; pointer-events: none; font: bold 30px/26px "Noto Sans CJK SC", sans-serif; }
    .mark b { display: block; font: 16px/18px "DejaVu Sans Condensed", sans-serif; }
  `;

  private tools(list: string[]) {
    return list.map((entry) => {
      if (entry === "|") return html`<span class="sep"></span>`;
      const name = entry.replace(/[>*]/, "");
      const more = entry.endsWith(">");
      const button = html`<button class="tool ${entry.endsWith("*") ? "on" : ""}" aria-label=${name}>${icon(name)}</button>`;
      return more
        ? html`<span class="strip">${button}<button class="more ${name === "viewCube" ? "dark" : ""}" aria-label="${name} options"></button></span>`
        : button;
    });
  }

  private grip() {
    return html`<span class="grip"><i></i><i></i></span>`;
  }

  private rail(list: string[], cls: string) {
    return html`<div class="rail ${cls}" role="toolbar">${this.grip()}${this.tools(list)}</div>`;
  }

  private combo(label: string, options: string[], value: string) {
    return html`<div class="combo">
      <select aria-label=${label} @change=${(e: Event) => label === "Texture" && (this.texture = (e.target as HTMLSelectElement).value)}>
        ${options.map((o) => html`<option ?selected=${o === value}>${o}</option>`)}
      </select>
      <span class="knob">${chevron(DOWN)}</span>
    </div>`;
  }

  private scene() {
    return html`<svg class="scene" viewBox="305 110 634 588" role="img" aria-label="Textured cylinder">
      <defs>
        <linearGradient id="shade"><stop offset="0" stop-color="#000" stop-opacity=".4"/><stop offset=".08" stop-color="#000" stop-opacity=".22"/>
          <stop offset=".25" stop-color="#000" stop-opacity=".06"/><stop offset=".35" stop-color="#000" stop-opacity="0"/><stop offset=".5" stop-color="#000" stop-opacity=".06"/>
          <stop offset=".7" stop-color="#000" stop-opacity=".28"/><stop offset=".84" stop-color="#000" stop-opacity=".58"/>
          <stop offset=".94" stop-color="#000" stop-opacity=".88"/><stop offset="1" stop-color="#000"/></linearGradient>
        <filter id="grain" x="0" y="0" width="1" height="1"><feTurbulence type="fractalNoise" baseFrequency=".7" numOctaves="2"/>
          <feColorMatrix values="0 0 0 0 0  0 0 0 0 0  0 0 0 0 0  1.6 0 0 0 -.6"/></filter>
        <clipPath id="body"><path d=${BODY}/></clipPath>
      </defs>
      <g transform="translate(521.5 196) rotate(17.4)">
        <path d=${BODY} fill="#cacaca"/>
        <g clip-path="url(#body)" fill="none">
          <path d=${grooves} stroke="#8e8e8e" stroke-width="4" opacity=".3"/>
          <path d=${dashes(-3)} stroke="#e4e4e4" stroke-width="3"/>
          <path d=${dashes(0)} stroke="#6c6c6c" stroke-width="2.500"/>
          <rect width="202" height="350" fill="#000" filter="url(#grain)" opacity=".2"/>
          <rect width="202" height="350" fill="url(#shade)"/>
        </g>
        <path d=${BODY} fill="none" stroke="#111"/>
        <ellipse cx="100.700" cy="0" rx="100.700" ry="10.500" fill="#464646" stroke="#0b0b0b"/>
      </g>
    </svg>`;
  }

  private canvas() {
    return html`<div class="canvas">
      ${this.scene()}
      <div class="root"><span class="plus">+</span>${icon("part")}<span>例子</span></div>
      <svg class="corner" viewBox="0 0 104 104" role="img" aria-label="Confirmation corner">
        <path d="M0 0H104V104z" fill="#62a584"/><path d="M52 51L103 0" stroke="#3b7d5c"/>
        <path d="M45 18l4 9L67 9" fill="none" stroke="#0a5d21" stroke-width="6" stroke-linecap="round" stroke-linejoin="round"/>
        <path d="M45 18l4 9L67 9" fill="none" stroke="#1fae42" stroke-width="3" stroke-linecap="round" stroke-linejoin="round"/>
        <path d="M79 44l14 15M93 41Q84 50 78 60" fill="none" stroke="#6b3014" stroke-width="5" stroke-linecap="round"/>
        <path d="M79 44l14 15M93 41Q84 50 78 60" fill="none" stroke="#a4603c" stroke-width="2" stroke-linecap="round"/>
      </svg>
      <svg class="triad" viewBox="306 622 60 60" role="img" aria-label="Axis triad">
        <path d="M345 640l-24-8" stroke="#7d1410" stroke-width="4"/><path d="M345 640l-24-8" stroke="#e02a22" stroke-width="2"/>
        <path d="M328 630l-12 1 9 8z" fill="#7d1410"/><path d="M311 626l6 6M317 626l-6 6" stroke="#b82a1e"/>
        <path d="M344 642l-6 22" stroke="#15178c" stroke-width="4"/><path d="M344 642l-6 22" stroke="#6f7df2"/>
        <path d="M334 659l8 2-7 9z" fill="#15178c"/><path d="M332 670h6l-7 8h6" fill="none" stroke="#2a35b8"/>
        <path d="M344 638h8v5h-8z" fill="#0a4a1c"/>
      </svg>
      <div class="custom"><button>Custom</button><button aria-label="Custom options"></button></div>
    </div>`;
  }

  private swatch() {
    return html`<svg class="swatch" viewBox="0 0 146 124" preserveAspectRatio="xMinYMin slice" role="img" aria-label="Waffle preview">
      <defs>
        <pattern id="tile" width="36" height="39.500" patternUnits="userSpaceOnUse" x="1" y="4">
          <path d="M0 0h36v39.500H0z" fill="#d2d2d2"/><path d="M0 0h3l2 34-3 5.500H0zM36 0h-4l-1 34 3 5.500h2z" fill="#b9b9b9"/>
          <path d="M2 33l5-6h22l4 6z" fill="#ececec"/><path d="M1 34h33l-5 5H6z" fill="#828282"/><path d="M0 28l3 5v6H0zM36 28l-3 5v6h3z" fill="#cdcdcd"/>
        </pattern>
        <filter id="speck" x="0" y="0" width="1" height="1"><feTurbulence type="fractalNoise" baseFrequency=".6" numOctaves="3"/>
          <feColorMatrix values="0 0 0 0 0  0 0 0 0 0  0 0 0 0 0  1.8 0 0 0 -.7"/></filter>
      </defs>
      <rect width="146" height="124" fill="url(#tile)"/>
      <rect width="146" height="124" filter="url(#speck)" opacity=".28"/>
      <path d="M92 15v3M40 66v3" stroke="#444"/>
    </svg>`;
  }

  private panel() {
    const leaves = ["Neon 2", "Splatter", "Swirl", "Waffle", "Wrought"];
    return html`<aside class="panel">
      <div class="panelTop">
        <button aria-label="Feature tree">${icon("part")}</button>
        <button class="on" aria-label="Property manager">${icon("propPage")}</button>
        <button aria-label="Configurations">${icon("configs")}</button>
      </div>
      <div class="panelBody">
        <div class="props">
          <h2>${icon("brick")}Texture</h2>
          <div class="rounds">
            <button aria-label="OK"><svg viewBox="0 0 20 20"><path d="M4 11l4 5 8-12" stroke="#7ddc3a" stroke-width="2.500"/></svg></button>
            <button aria-label="Cancel"><svg viewBox="0 0 20 20"><path d="M4 4q6 5 10 13M15 2Q9 8 5 18" stroke="#d8352c" stroke-width="3.500"/></svg></button>
            <button aria-label="Help"><svg viewBox="0 0 20 20"><path d="M5 6q0-4 5-4t5 4q0 3-5 5v3M10 16v3" stroke="#8f63e0" stroke-width="3.200"/></svg></button>
            <button aria-label="Keep visible"><svg viewBox="0 0 20 20"><path d="M-3 9h9" stroke="#e8f2ff" stroke-width="2"/><path d="M5 4h3v3h6V3h5v13h-5v-4H8v3H5z" fill="#2f62c8" stroke="#0e2660"/></svg></button>
          </div>
          <section class="card">
            <h3><span><u>S</u>election</span></h3>
            <div class="select">
              <div class="kinds">${["green", "orange", "yellow", "yellowGreen"].map((n) => html`<button aria-label="Select ${n}">${icon(n)}</button>`)}</div>
              <ul class="faces"><li>Face&lt;1&gt;</li></ul>
            </div>
            <button class="wideBtn">Remove Textures</button>
          </section>
          <section class="card in">
            <h3><span><u>T</u>exture Selection</span></h3>
            ${this.combo("Library", ["SolidWorks Textures"], "SolidWorks Textures")}
            <div class="treeBox">
              <ul class="tree">
                <li><ul>${leaves.map((l) => html`<li class=${l === this.texture ? "on" : ""} @click=${() => (this.texture = l)}><span>${l}</span></li>`)}</ul></li>
                <li class="node">Floors</li><li class="node">Wall</li>
              </ul>
              <div class="bar"><span class="knob">${chevron(UP)}</span><span class="thumb"></span><span class="knob">${chevron(DOWN)}</span></div>
            </div>
            ${this.combo("Texture", leaves, this.texture)}
          </section>
          <section class="card in">
            <h3><span>Texture <u>P</u>roperties</span></h3>
            ${this.swatch()}
          </section>
        </div>
        <div class="bar"><span class="knob">${chevron(UP)}</span><span class="thumb tall"><i></i></span><span class="space"></span><span class="knob">${chevron(DOWN)}</span></div>
      </div>
    </aside>`;
  }

  render() {
    const min = "M1 8h8", rest = "M3 3V1h6v5H7M1 4h5v5H1z", close = "M1 1l8 8M9 1L1 9";
    const winBtn = (d: string, label: string, cls = "") => html`<button class=${cls} aria-label=${label}><svg viewBox="0 0 10 10"><path d=${d} /></svg></button>`;
    const collapse = html`<button class="collapse" aria-label="Collapse"><svg viewBox="0 0 10 10"><path d="M5 1L1 5l4 4M9 1L5 5l4 4"/></svg></button>`;
    return html`
      <header class="title">${icon("swLogo")}<h1>SolidWorks Office Premium 2006 - [<span>例子</span>.SLDPRT *]</h1>
        <div class="win">${winBtn(min, "Minimize")}${winBtn(rest, "Restore")}${winBtn(close, "Close", "x")}</div></header>
      <div class="menu">${icon("part")}
        <nav>${menus.map(([a, k, b]) => html`<button>${a}<u>${k}</u>${b}</button>`)}</nav>
        <div class="doc">${winBtn(min, "Minimize document")}${winBtn(rest, "Restore document")}${winBtn(close, "Close document")}</div></div>
      <div class="row">
        <div class="strip end">${this.grip()}${this.tools(standardBar)}</div>
        <div class="strip end">${this.grip()}${this.tools(viewBar)}</div>
        <div class="strip">${this.grip()}${this.tools(captureBar)}</div>
      </div>
      <div class="row last">
        <div class="strip">${this.grip()}</div>
        <div class="strip tint">${this.tools(commandBar)}</div>
        <div class="strip end">${this.tools(featureBar)}</div>
        <div class="strip push">${this.grip()}${this.tools(orientBar)}</div>
      </div>
      <div class="main">
        ${this.rail(leftBars[0], "wide")}${this.rail(leftBars[1], "mid")}${this.rail(leftBars[2], "mid")}
        ${this.panel()}
        <div class="work">
          <div class="view">
            ${this.canvas()}
            <div class="side"><div><div class="split"></div><span class="pale">${chevron(UP)}</span></div><span class="pale">${chevron(DOWN)}</span></div>
          </div>
          <div class="sheets">
            <button class="nav" aria-label="Previous tab">${chevron("M7 0v10L2 5z")}</button><button class="nav" aria-label="Next tab">${chevron("M3 0v10l5-5z")}</button>
            <svg class="slash" viewBox="0 0 8 15"><path d="M2 0l6 15"/></svg><button class="sheet on">Model</button><button class="sheet off">Animation1</button>
            <svg class="slash" viewBox="0 0 8 15"><path d="M1 15L8 0"/></svg>
            <div class="hbar"><span class="pale">${chevron(LEFT)}</span><span class="pale">${chevron(RIGHT)}</span></div>
          </div>
        </div>
        <div class="pane">
          <div class="tabs"><button aria-label="Resources">${icon("house")}</button><button class="on" aria-label="Design library">${icon("books")}</button><button aria-label="File explorer">${icon("folderSearch")}</button></div>
          ${collapse}<div class="rails"></div>${collapse}
        </div>
        ${this.rail(sketchBar, "right")}
      </div>
      <footer class="status"><p>Select entities to modify their texture</p>
        <span class="ticks"><i></i><i></i><i></i></span><output>Editing Part</output><span class="ticks"><i></i><i></i><i></i></span><span class="q">?</span></footer>
      <div class="task">
        <button class="start">${icon("flag", "l")}start</button>
        <div class="quick"><span class="dots"></span>${["ie2", "desktop", "swLogo", "outlook"].map((n) => html`<button aria-label=${n}>${icon(n)}</button>`)}<span class="more2">»</span><span class="dots"></span></div>
        <div class="apps">${tasks.map(([i, t], n) => html`<button class=${n === 0 ? "on" : nothing}>${icon(i)}${t}</button>`)}</div>
        <span class="quick"><span class="dots"></span></span><span class="mid2">${icon("restore")}</span>
        <div class="tray"><svg class="chev" viewBox="0 0 10 10"><path d=${LEFT} stroke="#dde"/></svg>${icon("person")}${icon("search")}<time>15:31</time></div>
      </div>
      <div class="mark">三维网<b>3dPortal.cn</b></div>`;
  }
}
